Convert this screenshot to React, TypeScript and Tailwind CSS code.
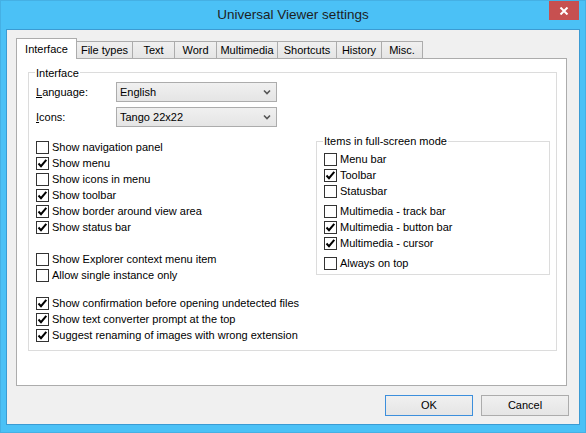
import React from "react";

type Item = { label: string; checked: boolean };

const tabs = [
  { label: "File types", w: "w-[56px]" },
  { label: "Text", w: "w-[42px]" },
  { label: "Word", w: "w-[42px]" },
  { label: "Multimedia", w: "w-[61px]" },
  { label: "Shortcuts", w: "w-[59px]" },
  { label: "History", w: "w-[45px]" },
  { label: "Misc.", w: "w-[41px]" },
];

const leftGroups: { gap: string; items: Item[] }[] = [
  {
    gap: "",
    items: [
      { label: "Show navigation panel", checked: false },
      { label: "Show menu", checked: true },
      { label: "Show icons in menu", checked: false },
      { label: "Show toolbar", checked: true },
      { label: "Show border around view area", checked: true },
      { label: "Show status bar", checked: true },
    ],
  },
  {
    gap: "mt-4",
    items: [
      { label: "Show Explorer context menu item", checked: false },
      { label: "Allow single instance only", checked: false },
    ],
  },
  {
    gap: "mt-3",
    items: [
      { label: "Show confirmation before opening undetected files", checked: true },
      { label: "Show text converter prompt at the top", checked: true },
      { label: "Suggest renaming of images with wrong extension", checked: true },
    ],
  },
];

const rightGroups: { gap: string; items: Item[] }[] = [
  {
    gap: "mt-[2px]",
    items: [
      { label: "Menu bar", checked: false },
      { label: "Toolbar", checked: true },
      { label: "Statusbar", checked: false },
    ],
  },
  {
    gap: "mt-1",
    items: [
      { label: "Multimedia - track bar", checked: false },
      { label: "Multimedia - button bar", checked: true },
      { label: "Multimedia - cursor", checked: true },
    ],
  },
  {
    gap: "mt-1",
    items: [{ label: "Always on top", checked: false }],
  },
];

function Check({ label, checked }: Item) {
  return (
    <div className="flex h-4 items-center gap-[3px]">
      <span className="flex h-[13px] w-[13px] shrink-0 items-center justify-center border border-[#333] bg-white">
        {checked && (
          <svg width="11" height="11" viewBox="0 0 11 11">
            <path d="M1.5 5.5 L4 8.2 L9.3 1.8" fill="none" stroke="#000" strokeWidth="2" />
          </svg>
        )}
      </span>
      <span className="whitespace-nowrap">{label}</span>
    </div>
  );
}

function Combo({ value }: { value: string }) {
  return (
    <div className="flex h-5 w-[161px] items-center justify-between border border-[#acacac] bg-gradient-to-b from-[#f0f0f0] to-[#e5e5e5] pl-[3px] pr-[5px]">
      <span>{value}</span>
      <svg width="8" height="6" viewBox="0 0 8 6">
        <path d="M1 1.5 L4 4.5 L7 1.5" fill="none" stroke="#555" strokeWidth="1.6" />
      </svg>
    </div>
  );
}

export default function App() {
  return (
    <div className="flex h-[433px] w-[586px] flex-col border border-[#45b0e4] bg-[#4bc1f6] font-['Liberation_Sans',Arial,sans-serif] text-[11px] text-black">
      {/* Title bar */}
      <div className="relative flex h-[28px] shrink-0 items-center justify-center">
        <span className="text-[13.5px] text-[#1e1e1e]">Universal Viewer settings</span>
        <button className="absolute right-[6px] top-0 flex h-[19px] w-[30px] items-center justify-center bg-[#c75050]">
          <svg width="10" height="8" viewBox="0 0 10 8">
            <path d="M1.5 0.5 L8.5 7.5 M8.5 0.5 L1.5 7.5" stroke="#fff" strokeWidth="2" />
          </svg>
        </button>
      </div>

      {/* Client area */}
      <div className="mx-[5px] mb-[7px] flex flex-1 flex-col border border-[#3b9bd3] bg-[#f0f0f0] pl-[9px] pt-[8px]">
        {/* Tabs */}
        <div className="flex h-5 items-end">
          <div className="relative z-10 -mb-px flex h-[21px] w-[61px] items-center justify-center border border-b-0 border-[#acacac] bg-white">
            Interface
          </div>
          {tabs.map((t) => (
            <div
              key={t.label}
              className={`flex h-[17px] ${t.w} items-center justify-center border-r border-t border-[#acacac] bg-gradient-to-b from-[#f0f0f0] to-[#e5e5e5] pt-px`}
            >
              {t.label}
            </div>
          ))}
        </div>

        {/* Panel */}
        <div className="h-[328px] w-[551px] border border-[#acacac] bg-white">
          <div className="ml-[11px] mt-[13px] w-[529px] border border-[#dcdcdc] pb-[7px]">
            <div className="-mt-[8px] ml-[6px] w-fit bg-white px-px leading-4">Interface</div>

            <div className="mt-px flex items-center pl-[7px]">
              <span className="w-[80px]">
                <span className="underline">L</span>anguage:
              </span>
              <Combo value="English" />
            </div>
            <div className="mt-[5px] flex items-center pl-[7px]">
              <span className="w-[80px]">
                <span className="underline">I</span>cons:
              </span>
              <Combo value="Tango 22x22" />
            </div>

            <div className="mt-3 flex items-start">
              <div className="flex flex-1 flex-col pl-[7px]">
                {leftGroups.map((g, i) => (
                  <div key={i} className={g.gap}>
                    {g.items.map((it) => (
                      <Check key={it.label} {...it} />
                    ))}
                  </div>
                ))}
              </div>

              <div className="mr-[6px] mt-[2px] w-[234px] border border-[#dcdcdc] pb-[3px] pl-[7px]">
                <div className="-mt-[9px] -ml-px w-fit bg-white px-px leading-4">Items in full-screen mode</div>
                {rightGroups.map((g, i) => (
                  <div key={i} className={g.gap}>
                    {g.items.map((it) => (
                      <Check key={it.label} {...it} />
                    ))}
                  </div>
                ))}
              </div>
            </div>
          </div>
        </div>

        {/* Buttons */}
        <div className="mr-[10px] mt-[9px] flex justify-end gap-2">
          <button className="h-[21px] w-[88px] border border-[#3c8fdc] bg-gradient-to-b from-[#f0f0f0] to-[#e5e5e5]">
            OK
          </button>
          <button className="h-[21px] w-[88px] border border-[#acacac] bg-gradient-to-b from-[#f0f0f0] to-[#e5e5e5]">
            Cancel
          </button>
        </div>
      </div>
    </div>
  );
}
